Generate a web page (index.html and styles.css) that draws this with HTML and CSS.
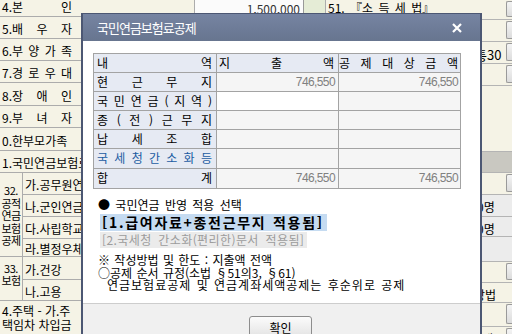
FILE: index.html
```html
<!DOCTYPE html>
<html lang="ko">
<head>
<meta charset="utf-8">
<title>국민연금보험료공제</title>
<link rel="stylesheet" href="styles.css">
</head>
<body>
<div class="screen">
  <div class="lcol">
    <div class="lrow r22"><span class="lbl">4.본 인</span></div>
    <div class="lrow r22"><span class="lbl">5.배 우 자</span></div>
    <div class="lrow r22"><span class="lbl">6.부 양 가 족</span></div>
    <div class="lrow r22"><span class="lbl">7.경 로 우 대</span></div>
    <div class="lrow r23"><span class="lbl">8.장 애 인</span></div>
    <div class="lrow r22"><span class="lbl">9.부 녀 자</span></div>
    <div class="lrow r23"><span class="lbl">0.한부모가족</span></div>
    <div class="lrow r22"><span class="nw">1.국민연금보험료공제</span></div>
    <div class="grp g32">
      <div class="gname">32.<br>공적<br>연금<br>보험<br>공제</div>
      <div class="gitems">
        <div class="lrow r22 sub">가.공무원연금</div>
        <div class="lrow r22 sub">나.군인연금</div>
        <div class="lrow r22 sub">다.사립학교교직원</div>
        <div class="lrow r18 sub">라.별정우체국연금</div>
      </div>
    </div>
    <div class="grp g33">
      <div class="gname">33.<br>보험</div>
      <div class="gitems">
        <div class="lrow r23 sub">가.건강</div>
        <div class="lrow r21 sub">나.고용</div>
      </div>
    </div>
    <div class="lrow tall">4.주택 - 가.주<br>택임차 차입금</div>
  </div>

  <div class="mcol">
    <div class="mtop">
      <div class="amt">1,500,000</div>
      <div class="grn"></div>
      <div class="law">51. 『소 득 세 법』</div>
    </div>
  </div>

  <div class="rcol">
    <div class="rrow h20"><span class="rt"></span><span class="rb"></span></div>
    <div class="rrow h22"><span class="rt"></span><span class="rb"></span></div>
    <div class="rrow h22"><span class="rt t30">통30</span><span class="rb"></span></div>
    <div class="rrow h22"><span class="rt"></span><span class="rb"></span></div>
    <div class="rrow h66"><span class="rt"></span></div>
    <div class="rrow h21 dark"><span class="rt"></span></div>
    <div class="rrow h22"><span class="rt"></span><span class="rb"></span></div>
    <div class="rrow h22 grey"><span class="rt tm">0명</span></div>
    <div class="rrow h20 grey"><span class="rt tm">0명</span></div>
    <div class="rrow h25 grey"><span class="rt"></span></div>
    <div class="rrow h21"><span class="rt"></span><span class="rb"></span></div>
    <div class="rrow h20"><span class="rt tb">방법</span></div>
    <div class="rrow h24"><span class="rt"></span><span class="rb"></span></div>
    <div class="rrow h24"><span class="rt td">대</span><span class="rb"></span></div>
  </div>

  <div class="dialog">
    <div class="titlebar">
      <span class="ttl">국민연금보험료공제</span>
      <svg class="xbtn" viewBox="0 0 10 10" width="10" height="10"><path d="M1 1L9 9M9 1L1 9" stroke="#fff" stroke-width="2.2" fill="none"/></svg>
    </div>
    <div class="dbody">
      <div class="tbl">
        <div class="c h lab">내 역</div>
        <div class="c h j2">지 출 액</div>
        <div class="c h j3">공 제 대 상 금 액</div>

        <div class="c lab">현 근 무 지</div>
        <div class="c v">746,550</div>
        <div class="c v n3">746,550</div>

        <div class="c lab">국 민 연 금 ( 지 역 )</div>
        <div class="c e"></div>
        <div class="c v"></div>

        <div class="c lab">종 ( 전 ) 근 무 지</div>
        <div class="c v"></div>
        <div class="c v"></div>

        <div class="c lab">납 세 조 합</div>
        <div class="c v"></div>
        <div class="c v"></div>

        <div class="c lab blue">국 세 청 간 소 화 등</div>
        <div class="c v"></div>
        <div class="c v"></div>

        <div class="c lab">합 계</div>
        <div class="c v">746,550</div>
        <div class="c v n3">746,550</div>
      </div>

      <div class="opts">
        <p class="sel">● 국민연금 반영 적용 선택</p>
        <p class="chl"><span class="ch on">[1.급여자료+종전근무지 적용됨]</span></p>
        <p class="chl"><span class="ch off">[2.국세청 간소화(편리한)문서 적용됨]</span></p>
        <p class="note first">※ 작성방법 및 한도 : 지출액 전액</p>
        <p class="note">○공제 순서 규정(소법 §51의3, §61)</p>
        <p class="note ind">연금보험료공제 및 연금계좌세액공제는 후순위로 공제</p>
      </div>
    </div>
    <div class="dfoot"><button class="ok">확인</button></div>
  </div>
</div>
</body>
</html>
```

FILE: styles.css
```css
* { box-sizing: border-box; margin: 0; padding: 0; }

body {
  width: 512px;
  height: 334px;
  overflow: hidden;
  font-family: "Noto Sans CJK KR", "Noto Sans", sans-serif;
  font-size: 12px;
  color: #000;
  background: #f5f3e6;
}

.screen {
  position: relative;
  display: flex;
  width: 512px;
  height: 334px;
  overflow: hidden;
}

/* ---------- background form ---------- */
.lcol {
  flex: none;
  width: 194px;
  margin-top: -5px;
  background: #f5f3e6;
  display: flex;
  flex-direction: column;
  overflow: hidden;
}

.lrow {
  display: flex;
  align-items: center;
  padding: 2px 0 0 2px;
  border-bottom: 1px solid #acacac;
  white-space: nowrap;
  flex: none;
}
.r18 { height: 18px; }
.r21 { height: 21px; }
.r22 { height: 22px; }
.r23 { height: 23px; }
.tall { height: 46px; line-height: 14px; align-items: flex-start; padding-top: 3px; }

.lbl {
  display: block;
  width: 70px;
  text-align: justify;
  text-align-last: justify;
}

.grp { display: flex; flex: none; }
.gname {
  flex: none;
  width: 23px;
  border-right: 1px solid #acacac;
  border-bottom: 1px solid #acacac;
  text-align: center;
  font-size: 11px;
  letter-spacing: -0.5px;
  line-height: 12.4px;
  display: flex;
  flex-direction: column;
  justify-content: center;
  white-space: nowrap;
  padding-top: 2px;
}
.g33 .gname { justify-content: flex-start; padding-top: 5px; }
.gitems { flex: 1; display: flex; flex-direction: column; }
.sub { padding-left: 2px; }

.mcol {
  flex: none;
  width: 246px;
}
.mtop {
  display: flex;
  height: 22px;
  margin-top: -5px;
  border-bottom: 1px solid #acacac;
  align-items: stretch;
}
.amt {
  width: 110px;
  background: #fbfbfb;
  border-left: 1px solid #acacac;
  border-right: 1px solid #999;
  text-align: right;
  padding: 5px 3px 0 0;
  color: #333;
}
.grn {
  width: 22px;
  background: #e5ecd6;
  border-right: 1px solid #acacac;
}
.law {
  flex: 1;
  padding: 4px 0 0 2px;
  white-space: nowrap;
  word-spacing: 2px;
}

.rcol {
  flex: none;
  width: 72px;
  display: flex;
  flex-direction: column;
}
.rrow {
  display: flex;
  border-bottom: 1px solid #b4b4b4;
  flex: none;
  background: #f5f3e6;
}
.h20 { height: 20px; }
.h21 { height: 21px; }
.h22 { height: 22px; }
.h24 { height: 24px; }
.h25 { height: 25px; }
.h66 { height: 66px; }
.dark { background: #c9c8c1; }
.grey { background: #ececec; }
.rt {
  flex: 1;
  white-space: nowrap;
  padding-top: 3px;
}
.t30 { padding-left: 35px; font-size: 13px; }
.tm { padding-left: 37px; }
.tb { padding-left: 34px; }
.td { padding-left: 42px; }
.rb {
  flex: none;
  width: 6px;
  margin: 1px 0 2px;
  background: linear-gradient(#f4f4f4, #dcdcdc);
  border: 1px solid #9a9a9a;
  border-right: none;
  border-radius: 2px 0 0 2px;
}

/* ---------- dialog ---------- */
.dialog {
  position: absolute;
  left: 81px;
  top: 13px;
  width: 401px;
  height: 340px;
  border: 2px solid #4c5773;
  border-top-width: 1px;
  background: #fff;
  display: flex;
  flex-direction: column;
}

.titlebar {
  flex: none;
  height: 27px;
  background: linear-gradient(#7684a2, #67758f);
  color: #fff;
  display: flex;
  align-items: center;
  justify-content: space-between;
  padding: 0 18px 0 14px;
}
.ttl { font-size: 13px; letter-spacing: -1px; }
.xbtn { display: block; }

.dbody {
  flex: none;
  height: 262px;
  padding: 12px 10px 0;
}

.tbl {
  display: grid;
  width: 368px;
  grid-template-columns: 123px 122px 122px;
  grid-template-rows: repeat(5, 19px) 20px 20px;
  border-left: 1px solid #a3a3a3;
  border-top: 1px solid #a3a3a3;
}
.c {
  border-right: 1px solid #a3a3a3;
  border-bottom: 1px solid #a3a3a3;
  line-height: 18px;
  white-space: nowrap;
  overflow: hidden;
}
.h { background: #e6eaf3; }
.lab {
  background: #e6eaf3;
  padding: 0 4px 0 3px;
  text-align: justify;
  text-align-last: justify;
}
.j2 { padding: 0 4px 0 2px; text-align: justify; text-align-last: justify; }
.j3 { padding: 0 2px 0 0; text-align: justify; text-align-last: justify; }
.blue { color: #1b5ca2; }
.v {
  background: #f5f5f5;
  text-align: right;
  padding-right: 3px;
  color: #808080;
  font-family: "Liberation Sans", sans-serif;
  letter-spacing: -0.6px;
}
.n3 { padding-right: 2px; }
.e { background: #fff; }

.opts {
  margin-top: 7px;
  padding-left: 5px;
}
.sel { height: 18px; line-height: 18px; word-spacing: 2px; }
.chl { padding-left: 2px; }
.ch {
  display: inline-block;
  padding: 0 3px 0 2px;
}
.on {
  height: 17px;
  line-height: 17px;
  background: #c5dbf1;
  font-size: 14px;
  font-weight: bold;
  letter-spacing: 1.7px;
  word-spacing: 1px;
}
.off {
  height: 16px;
  line-height: 16px;
  background: #ebebeb;
  color: #9c9c9c;
  letter-spacing: 0.4px;
  word-spacing: 3px;
}
.note { line-height: 12.6px; word-spacing: 1px; }
.first { margin-top: 6px; }
.ind { padding-left: 9px; letter-spacing: 1px; }

.dfoot {
  flex: 1;
  background: #f0f0f0;
  border-top: 1px solid #cdcdcd;
  padding-top: 12px;
  display: flex;
  justify-content: center;
  align-items: flex-start;
}
.ok {
  width: 63px;
  height: 23px;
  font-family: "Noto Sans CJK KR", sans-serif;
  font-size: 12px;
  color: #000;
  background: linear-gradient(#fbfbfb, #e2e2e2);
  border: 1px solid #8d8d8d;
  border-radius: 3px;
  margin-left: -2px;
}
```
